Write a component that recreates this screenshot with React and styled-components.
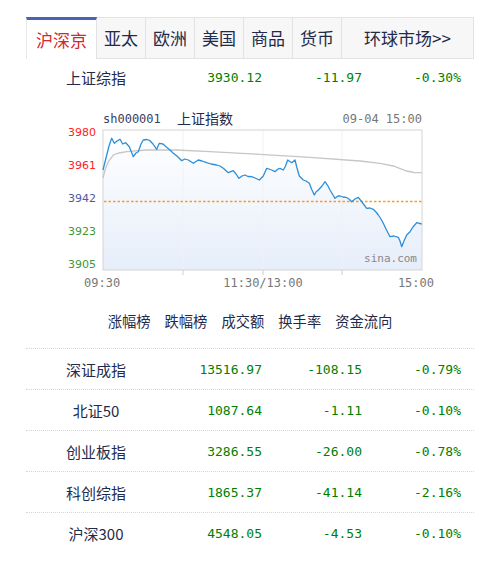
import React from "react";
import styled, { createGlobalStyle } from "styled-components";

const GlobalStyle = createGlobalStyle`
  body {
    margin: 0;
    background: #fff;
    font-family: "Noto Sans CJK SC", "Noto Sans", sans-serif;
  }
`;

const tabs = [
  { label: "沪深京", width: 71, active: true },
  { label: "亚太", width: 49 },
  { label: "欧洲", width: 49 },
  { label: "美国", width: 49 },
  { label: "商品", width: 49 },
  { label: "货币", width: 49 },
  { label: "环球市场>>", width: 132 },
];

const links = ["涨幅榜", "跌幅榜", "成交额", "换手率", "资金流向"];

const rows = [
  ["深证成指", "13516.97", "-108.15", "-0.79%"],
  ["北证50", "1087.64", "-1.11", "-0.10%"],
  ["创业板指", "3286.55", "-26.00", "-0.78%"],
  ["科创综指", "1865.37", "-41.14", "-2.16%"],
  ["沪深300", "4548.05", "-4.53", "-0.10%"],
];

// price line, page coordinates
const price = [
  [103, 170], [106, 158], [109, 146], [111.7, 138.3], [114.3, 143.3], [117, 141],
  [120, 139.3], [122.7, 144], [125.7, 142.7], [129.3, 146.7], [133.3, 156.7],
  [136, 153], [138.3, 151.7], [141, 144], [143.3, 140], [147, 139.5], [150, 140.7],
  [153, 144], [156.7, 149.3], [159.3, 143.3], [163, 144], [166, 146.7], [170, 150],
  [173.3, 153.3], [177, 156], [181.7, 160.7], [185, 159], [188.3, 160], [193.3, 163.3],
  [198.3, 160], [202, 161], [206.7, 162.7], [211, 164], [216.7, 165], [220, 166],
  [223.3, 168.3], [228.3, 172.7], [233.3, 170.7], [236, 174], [239, 178.3],
  [242, 176], [245, 175], [248, 176.5], [251.7, 176.7], [255, 178], [259.3, 180],
  [263.3, 176], [266.7, 168.3], [269, 169], [271.7, 170], [275, 171.7], [278, 169],
  [280, 168.3], [283.3, 170], [285.5, 166], [287.7, 160], [291.7, 162.7], [295, 160],
  [297, 168], [299.3, 176], [303.3, 180], [306, 181], [309.3, 183.3], [312, 190],
  [314.3, 195], [316, 192], [318.3, 190], [322, 186], [325, 181.7], [328, 186],
  [330, 190], [333, 195], [335, 198.3], [338, 196], [340, 196], [343, 197],
  [346, 197.3], [349, 199], [351.7, 201.7], [355, 199], [358.3, 197.3], [362, 202],
  [366.7, 208.3], [370, 208], [373.3, 209.3], [376, 212], [378.3, 215], [381, 219],
  [383.3, 223.3], [386, 229], [390, 236.7], [394, 236], [398.3, 237.3], [400, 241],
  [401.7, 246.7], [404, 241], [406.7, 235], [410, 231.7], [413, 227], [416.7, 222.7],
  [421.7, 224],
];

const avg = [
  [103, 178], [105, 170], [108.3, 161.7], [113.3, 155], [119, 153], [126.7, 151.7],
  [146.7, 150], [176.7, 150], [210, 151.7], [260, 154.3], [310, 157.3], [360, 161],
  [380, 163.3], [393.3, 166], [406.7, 171], [414, 172.5], [421.7, 172.7],
];

const toPath = (pts) =>
  pts.map(([x, y], i) => `${i ? "L" : "M"}${x} ${y}`).join(" ");

const yLabels = [
  { v: "3980", c: "#f22" },
  { v: "3961", c: "#f22" },
  { v: "3942", c: "#4a5aa6" },
  { v: "3923", c: "#3c9a3c" },
  { v: "3905", c: "#3c9a3c" },
];

const Page = styled.div`
  width: 448px;
  padding: 17px 0 0 26px;
`;

const TabBar = styled.div`
  display: flex;
  height: 42px;
`;

const Tab = styled.div`
  box-sizing: border-box;
  width: ${(p) => p.$width}px;
  display: flex;
  align-items: center;
  justify-content: center;
  font-size: 17px;
  color: ${(p) => (p.$active ? "#d0282e" : "#1f2b4b")};
  background: ${(p) => (p.$active ? "#fff" : "#f7f7f7")};
  border-top: ${(p) => (p.$active ? "3px solid #4862b4" : "1px solid #e3e3e3")};
  border-bottom: ${(p) => (p.$active ? "none" : "1px solid #e3e3e3")};
  border-left: ${(p) => (p.$active ? "1px solid #e8e8e8" : "none")};
  border-right: 1px solid #e3e3e3;
  padding-bottom: ${(p) => (p.$active ? "0" : "2px")};
`;

const Row = styled.div`
  display: grid;
  grid-template-columns: 140px 96px 100px 99px 13px;
  align-items: center;
  height: ${(p) => (p.$first ? 36 : 40)}px;
  border-top: ${(p) => (p.$first ? "none" : "1px dotted #cdd9e1")};
`;

const Name = styled.div`
  text-align: center;
  font-size: 15px;
  color: #1f2b4b;
`;

const Num = styled.div`
  text-align: right;
  font-family: "DejaVu Sans Mono", "Liberation Mono", monospace;
  font-size: 13px;
  color: #008000;
`;

const Chart = styled.svg`
  display: block;
`;

const Links = styled.div`
  display: flex;
  justify-content: center;
  gap: 14px;
  height: 40px;
  align-items: center;
  margin-bottom: 8px;
`;

const LinkItem = styled.a`
  font-size: 14.3px;
  color: #1f2b4b;
  text-decoration: none;
`;

const Table = styled.div`
  width: 448px;
`;

const mono = '"DejaVu Sans Mono", "Liberation Mono", monospace';

const PriceChart = () => (
  <Chart width="448" height="205" viewBox="26 95 448 205">
    <defs>
      <linearGradient id="area" x1="0" y1="130" x2="0" y2="270" gradientUnits="userSpaceOnUse">
        <stop offset="0" stopColor="#ffffff" />
        <stop offset="1" stopColor="#e6eefa" />
      </linearGradient>
    </defs>
    <text x="103" y="123" fontFamily={mono} fontSize="12" fill="#3a4160">sh000001</text>
    <text x="177" y="124" fontFamily='"Noto Sans CJK SC", sans-serif' fontSize="14" fill="#1f2b4b">上证指数</text>
    <text x="422" y="123" textAnchor="end" fontFamily={mono} fontSize="12" fill="#777">09-04 15:00</text>

    <path d={`${toPath(price)} L421.7 270 L103 270 Z`} fill="url(#area)" />
    {[183, 263, 342].map((x) => (
      <g key={x}>
        <line x1={x} y1="130" x2={x} y2="270" stroke="#f1f1f1" />
        <line x1={x} y1="270" x2={x} y2="275" stroke="#ccc" />
      </g>
    ))}
    <rect x="103" y="130" width="319" height="140" fill="none" stroke="#d4d4d4" />
    <line x1="104" y1="201.5" x2="422" y2="201.5" stroke="#ff9a1f" strokeWidth="1.4" strokeDasharray="2.5 2" />
    <path d={toPath(avg)} fill="none" stroke="#c6c6c6" strokeWidth="1.3" />
    <path d={toPath(price)} fill="none" stroke="#2c8fd8" strokeWidth="1.3" strokeLinejoin="round" />

    {yLabels.map((l, i) => (
      <text key={l.v} x="96" y={136 + i * 33} textAnchor="end" fontFamily='"DejaVu Sans", sans-serif' fontSize="11" fill={l.c}>
        {l.v}
      </text>
    ))}
    <text x="84" y="287" fontFamily={mono} fontSize="12" fill="#777">09:30</text>
    <text x="263" y="287" textAnchor="middle" fontFamily={mono} fontSize="12" fill="#777">11:30/13:00</text>
    <text x="434" y="287" textAnchor="end" fontFamily={mono} fontSize="12" fill="#777">15:00</text>
    <text x="417" y="262" textAnchor="end" fontFamily={mono} fontSize="11" fill="#888">sina.com</text>
  </Chart>
);

const App = () => (
  <Page>
    <GlobalStyle />
    <TabBar>
      {tabs.map((t) => (
        <Tab key={t.label} $width={t.width} $active={t.active}>
          {t.label}
        </Tab>
      ))}
    </TabBar>
    <Row $first>
      <Name>上证综指</Name>
      <Num>3930.12</Num>
      <Num>-11.97</Num>
      <Num>-0.30%</Num>
    </Row>
    <PriceChart />
    <Links>
      {links.map((l) => (
        <LinkItem key={l} href="#">{l}</LinkItem>
      ))}
    </Links>
    <Table>
      {rows.map((r) => (
        <Row key={r[0]}>
          <Name>{r[0]}</Name>
          <Num>{r[1]}</Num>
          <Num>{r[2]}</Num>
          <Num>{r[3]}</Num>
        </Row>
      ))}
    </Table>
  </Page>
);

export default App;
